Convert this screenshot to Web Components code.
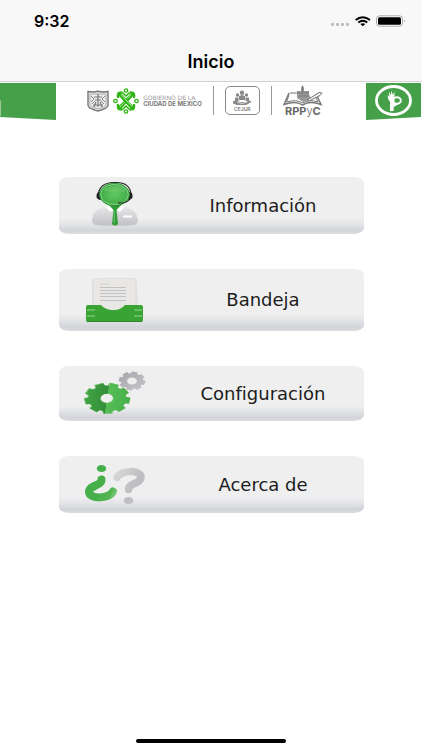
<!DOCTYPE html>
<html lang="es">
<head>
<meta charset="utf-8">
<meta name="viewport" content="width=device-width, initial-scale=1">
<title>Inicio</title>
<style>
    body { margin: 0; background: #fff; color: #000; font-family: Inter, "Liberation Sans", sans-serif; }
</style>
</head>
<body>
<app-screen>
    <status-bar slot="top" time="9:32"></status-bar>
    <nav-title slot="top">Inicio</nav-title>
    <brand-banner></brand-banner>
    <main-menu>
        <menu-button icon="info">Información</menu-button>
        <menu-button icon="tray">Bandeja</menu-button>
        <menu-button icon="gears">Configuración</menu-button>
        <menu-button icon="about">Acerca de</menu-button>
    </main-menu>
</app-screen>

<script>
class AppScreen extends HTMLElement
{
    constructor() {
        super()
        this.attachShadow({ mode: "open" }).innerHTML = `
            <style>
                :host       { display: flex; flex-direction: column; min-height: 100vh; }
                header      { background: #f8f8f8; border-bottom: 1px solid #d2d2d2; }
                .home       { width: 150px; height: 4px; margin: auto auto 7px; border-radius: 2px; background: #000; }
            </style>
            <header><slot name=top></slot></header>
            <slot></slot>
            <div class=home></div>
        `
    }
}

class StatusBar extends HTMLElement
{
    connectedCallback() {
        this.attachShadow({ mode: "open" }).innerHTML = `
            <style>
                :host       { display: flex; align-items: center; justify-content: space-between; height: 42px; padding: 0 16px 0 34px; }
                .time       { font-size: 16px; font-weight: 600; }
                svg         { display: block; }
            </style>
            <span class=time>${this.getAttribute("time")}</span>
            <svg width="76" height="14" viewBox="0 0 76 14">
                <g fill="#bdbdbd">
                    <rect x="1" y="9" width="3" height="3" rx="1"/><rect x="6" y="9" width="3" height="3" rx="1"/>
                    <rect x="11" y="9" width="3" height="3" rx="1"/><rect x="16" y="9" width="3" height="3" rx="1"/>
                </g>
                <g fill="none" stroke="#000" stroke-width="1.9">
                    <path d="M25.6 6 Q32.8 .3 40 6"/>
                    <path d="M28.3 8.6 Q32.8 5 37.3 8.6"/>
                </g>
                <path d="M30.3 10.1 Q32.8 8.3 35.3 10.1 L32.8 12.2Z"/>
                <rect x="46.5" y="1.8" width="26" height="10.4" rx="3" fill="#fff" stroke="#aaa"/>
                <rect x="48" y="3.2" width="23" height="7.6" rx="1.5"/>
                <path d="M74 5.2 Q75.7 7 74 8.8Z" fill="#aaa"/>
            </svg>
        `
    }
}

class NavTitle extends HTMLElement
{
    constructor() {
        super()
        this.attachShadow({ mode: "open" }).innerHTML = `
            <style>
                :host       { display: block; }
                h1          { margin: 0; font-size: 18px; line-height: 39px; font-weight: 600; text-align: center; }
            </style>
            <h1><slot></slot></h1>
        `
    }
}

class BrandBanner extends HTMLElement
{
    constructor() {
        super()
        this.attachShadow({ mode: "open" }).innerHTML = `
            <style>
                :host       { display: flex; justify-content: space-between; padding: 1px 1px 0 0; color: #777; }
                svg         { display: block; flex: none; }
                .logos      { display: flex; align-items: center; gap: 11px; height: 35px; margin-right: 12px; }
                .city       { display: flex; align-items: center; gap: 4px; }
                .name       { font-size: 6px; line-height: 6px; white-space: nowrap; }
                .name span  { display: block; color: #999; font-family: "DejaVu Sans", sans-serif; }
                .name b     { display: block; color: #777; }
                .rule       { width: 1px; height: 29px; background: #999; }
                .cejur      { display: flex; flex-direction: column; align-items: center; box-sizing: border-box; width: 35px; height: 29px;
                              padding-top: 3px; border: 1px solid #888; border-radius: 5px; font-size: 5px; line-height: 6px; font-weight: 600; }
                .rpp        { display: flex; flex-direction: column; align-items: center; font-size: 11px; line-height: 10px; font-weight: 700; color: #666; }
                .rpp span   { font-weight: 300; }
            </style>
            <svg width="56" height="37" viewBox="0 0 56 37">
                <path d="M0 0H56V37L0 34Z" fill="#45a049"/>
                <path d="M0 17L1 18V33H0Z" fill="#9bcb9d"/>
            </svg>
            <div class=logos>
                <div class=city>
                    <svg width="22" height="22" viewBox="0 0 22 22" fill="none" stroke="#777">
                        <path d="M1 1.5Q6 2.5 11 1.3Q16 2.5 21 1.5V15Q21 18.5 11 21Q1 18.5 1 15Z" fill="#eee" stroke-width="1.4"/>
                        <path d="M3 4H19V15Q18 17.5 11 19Q4 17.5 3 15Z" stroke="#aaa"/>
                        <path d="M11 4V17M7 7H15M8 10H14M6 15H16M9 12L7 17M13 12L15 17" stroke-width="1.2"/>
                        <path d="M4 6L7 9L4 12M18 6L15 9L18 12M5 14L8 11M17 14L14 11" stroke-width=".9"/>
                    </svg>
                    <svg width="26" height="26" viewBox="0 0 26 26" fill="none" stroke="#2eb512">
                        <g stroke-width="3.4" stroke-linecap="round" stroke-linejoin="round">
                            <path d="M6 5.5L20 20.500M20 5.500L6 20.500"/>
                            <path d="M5 9Q4 5 8.500 4.500M17.500 4.500Q22 5 21 9M5 17Q4 21 8.500 21.500M17.500 21.500Q22 21 21 17" stroke-width="2.4"/>
                            <path d="M10 5L13 8L16 5M10 21L13 18L16 21" stroke-width="1.6"/>
                        </g>
                        <path d="M8 6.500L19 18.500M18 6.500L14.500 10.500M11.500 14L7 19" stroke="#d9f5d2" stroke-width=".8"/>
                        <g stroke-width="1.3">
                            <ellipse cx="13" cy="2.5" rx="1.8" ry="1.6"/><ellipse cx="13" cy="23.5" rx="1.8" ry="1.6"/>
                            <ellipse cx="2.5" cy="13" rx="1.8" ry="1.6"/><ellipse cx="23.5" cy="13" rx="1.8" ry="1.6"/>
                        </g>
                    </svg>
                    <div class=name><span>GOBIERNO DE LA</span><b>CIUDAD DE MÉXICO</b></div>
                </div>
                <div class=rule></div>
                <div class=cejur>
                    <svg width="20" height="16" viewBox="0 0 20 16" fill="#888">
                        <circle cx="10" cy="2.8" r="2.2"/><circle cx="5.5" cy="5" r="1.7"/><circle cx="14.5" cy="5" r="1.7"/>
                        <path d="M7 6L10 5L13 6V10H7ZM3 7.5H6.5V11H3ZM13.5 7.5H17V11H13.5Z"/>
                        <path d="M1 11Q5 10 8 12H14L18 10.5L19.5 12L14 15H5L1 13.5Z"/>
                        <path d="M5 12L10 13.5L15 12" fill="none" stroke="#fff" stroke-width=".7"/>
                    </svg>
                    CEJUR
                </div>
                <div class=rule></div>
                <div class=rpp>
                    <svg width="40" height="21" viewBox="0 0 40 21" fill="none" stroke="#777">
                        <path d="M6 8L1 19.5Q13 15.5 19.5 20Q27 15.5 38 19.5L33 9" stroke-width="1.5"/>
                        <path d="M7 8Q14 7 18 10M6 10L3.5 17Q14 14 19.5 18Q26 14 35 17L32 11" stroke-width="1"/>
                        <path d="M14 9V6H18V3L19.5 0L21 3V6H26V9L28 14L20 17L14 13Z" fill="#999" stroke="none"/>
                        <path d="M19.5 1V7M14 8H26M16 11H25" stroke-width="1.2"/>
                        <path d="M24 15L36 7.5L39 8L37 10.5L26 16Z" fill="#eee"/>
                    </svg>
                    <div>RPP<span>y</span>C</div>
                </div>
            </div>
            <svg width="55" height="37" viewBox="0 0 55 37">
                <path d="M0 0H55V34L0 37Z" fill="#45a049"/>
                <ellipse cx="27.5" cy="17.5" rx="17" ry="14" fill="none" stroke="#fff" stroke-width="2.8"/>
                <path d="M24 28V19Q21 15 22 12L23.5 14L22.8 8.5L25 12.5L25.3 7.5L27 12L28.5 8.5L28.5 15L27.5 28Z" fill="#fff"/>
                <ellipse cx="31" cy="17.5" rx="3.8" ry="3.2" fill="none" stroke="#fff" stroke-width="2"/>
                <path d="M28 20L34 20L28 24Z" fill="#fff"/>
            </svg>
        `
    }
}

class MainMenu extends HTMLElement
{
    constructor() {
        super()
        this.attachShadow({ mode: "open" }).innerHTML = `
            <style>
                :host       { display: block; padding: 57px 58px 36px 59px; }
                nav         { display: flex; flex-direction: column; gap: 35px; }
            </style>
            <nav><slot></slot></nav>
        `
    }
}

// outline of a cog, squashed to rx/ry
function cog(cx, cy, rx, ry, teeth, turn) {
    const points = []
    const step = Math.PI * 2 / teeth
    for (let i = 0; i < teeth; i++) {
        [[-.36, .83], [-.28, 1], [.28, 1], [.36, .83]].forEach(([offset, r]) => {
            const angle = turn + (i + offset) * step
            points.push(`${(cx + Math.cos(angle) * rx * r).toFixed(1)} ${(cy + Math.sin(angle) * ry * r).toFixed(1)}`)
        })
    }
    return `M${points.join("L")}Z`
}

function hole(cx, cy, rx, ry) {
    return `M${cx - rx} ${cy}a${rx} ${ry} 0 1 0 ${rx * 2} 0a${rx} ${ry} 0 1 0 ${-rx * 2} 0Z`
}

const icons = {
    info: `
        <svg width="62" height="57" viewBox="0 0 62 57">
            <defs>
                <linearGradient id="coat" x2="0" y2="1"><stop stop-color="#e6e6e8"/><stop offset="1" stop-color="#c0c1c5"/></linearGradient>
                <radialGradient id="lens"><stop stop-color="#62c762"/><stop offset="1" stop-color="#3fab45"/></radialGradient>
            </defs>
            <path d="M8 43Q8 33 20 30L31 36L42 30Q53 33 54 43Q54 47 50 48Q31 50 12 48Q8 47 8 43Z" fill="url(#coat)"/>
            <path d="M22 30L26 28L31 32L36 28L40 30L36 35L31 31L26 35Z" fill="#fff"/>
            <rect x="39" y="38.5" width="9" height="2" fill="#fff"/>
            <path d="M14 19Q15 5 31 5.5Q47 5 47 19" fill="none" stroke="#222" stroke-width="1.2"/>
            <path d="M16 15Q12 15 12.500 20Q13 22.500 17 23ZM45 15Q49 15 48.500 20Q48 22.500 44 23Z" fill="#222"/>
            <path d="M23 26L29.5 33L28 47Q31 50 34 47L32.5 33L39 26Z" fill="#319b38"/>
            <path d="M30.5 34L30 46" stroke="#6bc66d"/>
            <ellipse cx="30.5" cy="17.5" rx="15" ry="11.200" fill="url(#lens)" stroke="#258b30" stroke-width=".8"/>
            <ellipse cx="30.5" cy="17.5" rx="13.8" ry="10" fill="none" stroke="#8ad58a" stroke-width=".9"/>
            <path d="M19 13Q31 5 43 13Q36 18 19 13Z" fill="#8bdc87" opacity=".3"/>
            <path d="M46 22Q43 25.500 38 26M34 26H38" fill="none" stroke="#222" stroke-width="1.1"/>
        </svg>`,
    tray: `
        <svg width="62" height="62" viewBox="0 0 62 62">
            <path d="M8 13Q8 9 13 9H49Q53 9 53 13L54 40H8Z" fill="#e1e0de"/>
            <path d="M10 13Q10 10 14 10H47Q51 10 51 13V40H10Z" fill="#e8e7e5"/>
            <path d="M16 15H25" stroke="#cfcfcf"/>
            <path d="M16 18.500H42M16 21.500H42M16 24.500H42M16 27.500H42M16 31.500H42" stroke="#c2c2c2"/>
            <path d="M4 36H17Q21 41 29.5 41Q37 41 41 36H57Q59 36 59 38V51Q59 53 57 53H4Q2 53 2 51V38Q2 36 4 36Z" fill="#39a334"/>
            <path d="M3 41H11M3 47H11M50 41H58M50 47H58" stroke="#76c773" stroke-width="1.5"/>
            <path d="M3 52.5H58" stroke="#2c8a2b"/>
        </svg>`,
    gears: `
        <svg width="62" height="55" viewBox="0 0 62 55">
            <defs>
                <linearGradient id="green" x2="1" y2=".1"><stop stop-color="#43a646"/><stop offset=".53" stop-color="#348f38"/><stop offset=".54" stop-color="#56bd55"/><stop offset="1" stop-color="#48b04a"/></linearGradient>
                <linearGradient id="steel" x2="1" y2="1"><stop stop-color="#a4a4aa"/><stop offset="1" stop-color="#c6c6cb"/></linearGradient>
            </defs>
            <path d="${cog(48, 15, 13.5, 9.5, 8, .2)}${hole(48, 15, 5, 3.5)}" fill="url(#steel)" fill-rule="evenodd"/>
            <path d="${cog(22.5, 32, 23, 15.5, 9, .15)}${hole(22.5, 32, 6.5, 4.7)}" fill="#84ca83" fill-rule="evenodd"/>
            <path d="${cog(23.5, 32.5, 23, 15.5, 9, .15)}${hole(23, 32.5, 6.5, 4.7)}" fill="url(#green)" fill-rule="evenodd"/>
        </svg>`,
    about: `
        <svg width="62" height="57" viewBox="0 0 62 57" fill="none" stroke-width="8" stroke-linecap="round">
            <defs>
                <linearGradient id="leaf" gradientUnits="userSpaceOnUse" x1="14" y1="34" x2="34" y2="42"><stop stop-color="#46af49"/><stop offset=".6" stop-color="#52b653"/><stop offset="1" stop-color="#a0d8a0"/></linearGradient>
                <linearGradient id="ash" gradientUnits="userSpaceOnUse" x1="32" y1="14" x2="52" y2="26"><stop stop-color="#d9d9da"/><stop offset="1" stop-color="#bebec3"/></linearGradient>
            </defs>
            <path d="M17.5 23.5C18 30 5 29 5 36C5 43.500 26 43 29 35.500" stroke="url(#leaf)"/>
            <ellipse cx="17.5" cy="12.5" rx="4.7" ry="3.6" fill="#46af49"/>
            <path d="M44.5 33.5C44 27 57 28 57 21C57 13.500 36 14 33 21.500" stroke="url(#ash)" stroke-width="7.500"/>
            <ellipse cx="44.5" cy="44.5" rx="4.7" ry="3.6" fill="#bebec3"/>
        </svg>`,
}

class MenuButton extends HTMLElement
{
    connectedCallback() {
        this.attachShadow({ mode: "open" }).innerHTML = `
            <style>
                :host       { display: block; }
                button      { display: flex; align-items: center; gap: 16px; width: 100%; margin: 0; padding: 0 0 0 25px; border: 0; border-radius: 10px / 6px;
                              background: linear-gradient(#efefef 72%, #e4e5e8 82%, #d3d4d9 94%, #dcdde0); color: #1c1c1c;
                              font: 18px/24px "DejaVu Sans", sans-serif; cursor: pointer; }
                button:active { filter: brightness(.95); }
                svg         { display: block; flex: none; }
                .label      { flex: 1; text-align: center; }
            </style>
            <button type=button>${icons[this.getAttribute("icon")]}<span class=label><slot></slot></span></button>
        `
    }
}

customElements.define('app-screen', AppScreen)
customElements.define('status-bar', StatusBar)
customElements.define('nav-title', NavTitle)
customElements.define('brand-banner', BrandBanner)
customElements.define('main-menu', MainMenu)
customElements.define('menu-button', MenuButton)
</script>
</body>
</html>
